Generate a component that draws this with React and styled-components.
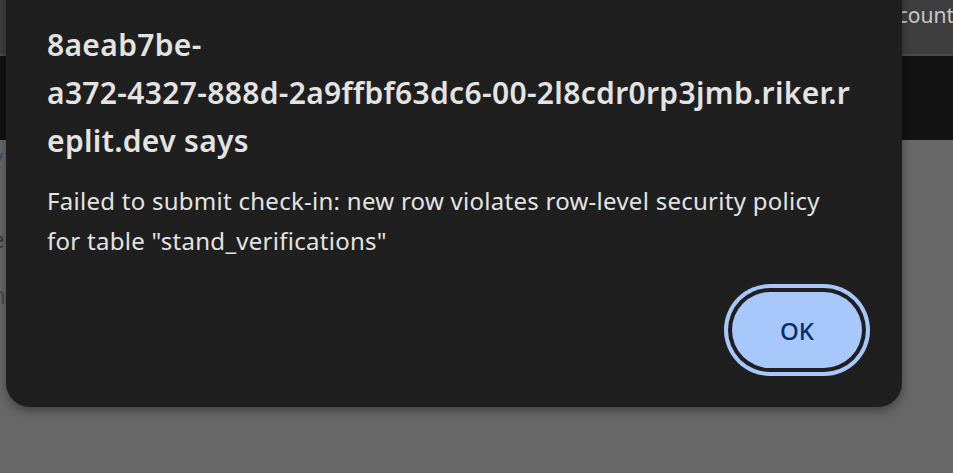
import React from "react";
import styled, { createGlobalStyle } from "styled-components";

const Global = createGlobalStyle`
  html, body { margin: 0; padding: 0; background: #676767; }
  body { width: 953px; height: 473px; overflow: hidden; font-family: "Noto Sans", "Open Sans", sans-serif; }
`;

const Page = styled.div`
  position: relative;
  width: 953px;
  height: 473px;
  display: flex;
  flex-direction: column;
  background: #676767;
  overflow: hidden;
`;

const TopBar = styled.div`
  height: 54px;
  flex: none;
  background: #3e3e3e;
  border-bottom: 2px solid #4a4a4a;
  display: flex;
  justify-content: space-between;
  align-items: flex-start;
  color: #bdbdbd;
  font-size: 21px;
  line-height: 30px;
`;

const Peek = styled.span`
  margin-left: ${(p) => p.$left || "0"};
  margin-right: ${(p) => p.$right || "0"};
  color: ${(p) => p.$color || "#c4c4c4"};
  white-space: nowrap;
`;

const NavBand = styled.div`
  height: 84px;
  flex: none;
  background: #121212;
`;

const Content = styled.div`
  flex: 1;
  display: flex;
  flex-direction: column;
  padding-top: 2px;
  color: #3a3a3a;
  font-size: 24px;
`;

const ContentLine = styled.div`
  height: ${(p) => p.$h}px;
  line-height: 30px;
  margin-left: -9px;
  color: ${(p) => p.$color || "#3a3a3a"};
`;

const Dialog = styled.div`
  position: absolute;
  left: 6px;
  top: -30px;
  width: 896px;
  box-sizing: border-box;
  padding: 51px 40px 39px 41px;
  background: #1f1f1f;
  border-radius: 0 0 24px 24px;
  box-shadow: 0 4px 10px rgba(0, 0, 0, 0.35);
  color: #e3e3e3;
  display: flex;
  flex-direction: column;
`;

const Title = styled.h1`
  margin: 0;
  font-size: 30px;
  font-weight: 600;
  line-height: 48px;
  letter-spacing: 0.33px;
`;

const Message = styled.p`
  margin: 16px 0 0 0;
  font-size: 24px;
  line-height: 40px;
  font-weight: 400;
  letter-spacing: 0.27px;
`;

const Actions = styled.div`
  display: flex;
  justify-content: flex-end;
  margin-top: 31px;
`;

const OkButton = styled.button`
  width: 130px;
  height: 76px;
  border: none;
  border-radius: 38px;
  background: #a8c7fa;
  color: #062e6f;
  font-family: "Noto Sans", "Open Sans", sans-serif;
  font-size: 24px;
  font-weight: 500;
  box-shadow: 0 0 0 4px #1f1f1f, 0 0 0 8px #a8c7fa;
  cursor: pointer;
`;

export default function App() {
  return (
    <>
      <Global />
      <Page>
        <TopBar>
          <Peek $left="-11px">E</Peek>
          <Peek $right="-1px" $color="#c8c8c8">Account</Peek>
        </TopBar>
        <NavBand />
        <Content>
          <ContentLine $h={82} $color="#3d4a66">v</ContentLine>
          <ContentLine $h={56}>e</ContentLine>
          <ContentLine $h={40} $color="#4a4a4a">n</ContentLine>
        </Content>
        <Dialog role="alertdialog">
          <Title>
            8aeab7be-
            <br />
            a372-4327-888d-2a9ffbf63dc6-00-2l8cdr0rp3jmb.riker.r
            <br />
            eplit.dev says
          </Title>
          <Message>
            Failed to submit check-in: new row violates row-level security policy
            <br />
            for table "stand_verifications"
          </Message>
          <Actions>
            <OkButton>OK</OkButton>
          </Actions>
        </Dialog>
      </Page>
    </>
  );
}
